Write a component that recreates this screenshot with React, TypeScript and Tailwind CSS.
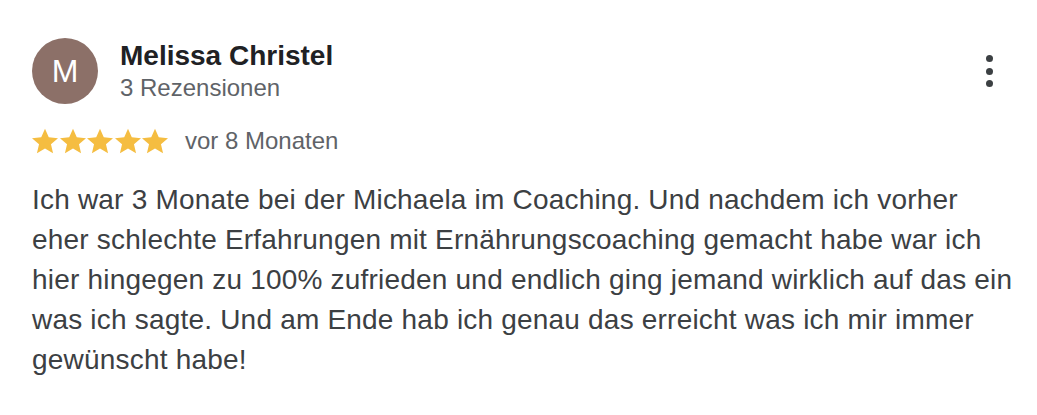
import React from "react";

const Star = () => (
  <svg width="26" height="26" viewBox="2 1.6 20 20" className="shrink-0">
    <path
      fill="#f5bd41"
      d="M12 2.2l2.9 6.6 7.1.6-5.4 4.7 1.6 7-6.2-3.7-6.2 3.7 1.6-7L2 9.4l7.1-.6z"
    />
  </svg>
);

export default function App() {
  const font = { fontFamily: '"Liberation Sans", Arial, sans-serif' };
  return (
    <div className="w-[1037px] h-[415px] bg-white" style={font}>
      <div className="pl-[32px] pt-[38px]">
        <div className="flex items-start">
          <div className="w-[66px] h-[66px] rounded-full bg-[#8c7068] flex items-center justify-center text-white text-[32px] leading-none shrink-0">
            M
          </div>
          <div className="ml-[22px] mt-[1px] flex-1">
            <div className="text-[28px] font-bold text-[#202124] leading-[34px]">Melissa Christel</div>
            <div className="text-[24px] text-[#5f6368] leading-[30px]">3 Rezensionen</div>
          </div>
          <div className="flex flex-col items-center gap-[5.5px] mt-[17px] mr-[44px]">
            <div className="w-[7px] h-[7px] rounded-full bg-[#3c4043]" />
            <div className="w-[7px] h-[7px] rounded-full bg-[#3c4043]" />
            <div className="w-[7px] h-[7px] rounded-full bg-[#3c4043]" />
          </div>
        </div>
        <div className="flex items-center mt-[22px]">
          <div className="flex gap-[1.5px]">
            <Star />
            <Star />
            <Star />
            <Star />
            <Star />
          </div>
          <div className="ml-[17px] text-[24px] text-[#5f6368] leading-[30px]">vor 8 Monaten</div>
        </div>
        <p className="mt-[24px] text-[28px] leading-[40px] tracking-[0.2px] text-[#3c4043] w-[1000px] whitespace-nowrap">
          Ich war 3 Monate bei der Michaela im Coaching. Und nachdem ich vorher
          <br />
          eher schlechte Erfahrungen mit Ernährungscoaching gemacht habe war ich
          <br />
          hier hingegen zu 100% zufrieden und endlich ging jemand wirklich auf das ein
          <br />
          was ich sagte. Und am Ende hab ich genau das erreicht was ich mir immer
          <br />
          gewünscht habe!
        </p>
      </div>
    </div>
  );
}
